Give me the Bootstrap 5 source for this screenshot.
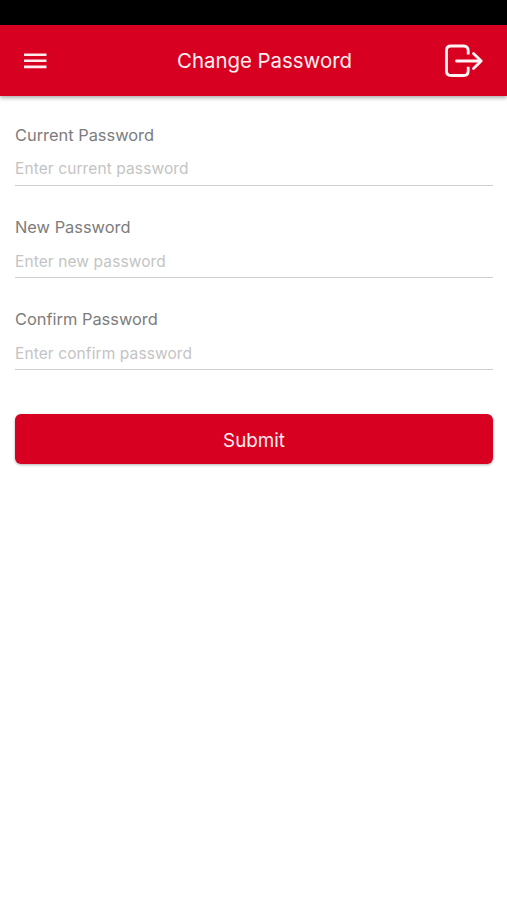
<!DOCTYPE html>
<html lang="en">
<head>
<meta charset="utf-8">
<meta name="viewport" content="width=device-width, initial-scale=1">
<title>Change Password</title>
<link href="https://cdn.jsdelivr.net/npm/bootstrap@5.3.0/dist/css/bootstrap.min.css" rel="stylesheet">
<style>
body { font-family: Inter, "Liberation Sans", sans-serif; min-height: 100vh; }
.status-strip { height: 25px; background: #000; }
.app-header { height: 71px; padding: 0 22px 0 23px; background: #d80020; box-shadow: 0 2px 4px rgba(0,0,0,.32); }
.app-title { font-size: 20.4px; line-height: 24px; color: #ffeef0; }
.header-side { width: 42px; }
.header-menu { width: 63px; }
.form-area { padding: 27px 14px 0 15px; }
.field { height: 92.2px; }
.field label { display: block; font-size: 16.4px; line-height: 24px; color: #7c7c7c; }
.field .form-control { height: 39px; padding: 10px 0 6px; border: 0; border-bottom: 1px solid #cfcfcf; border-radius: 0; font-size: 15.5px; line-height: 22px; letter-spacing: .1px; box-shadow: none; }
.field + .field label { padding-top: 1px; line-height: 23px; }
.field + .field .form-control { padding: 11px 0 5px; }
.field .form-control::placeholder { color: #c4c4c4; opacity: 1; }
.btn-submit, .btn-submit:hover { height: 50px; margin-top: 14.6px; padding: 8px 0 5px; border: 0; border-radius: 6px; background: #d80020; color: #ffeef0; font-size: 18.8px; box-shadow: 0 1px 3px rgba(0,0,0,.3); }
</style>
</head>
<body class="bg-white">
<div class="status-strip"></div>
<header class="app-header d-flex align-items-center justify-content-between">
  <button class="header-menu btn p-0 border-0 d-flex" type="button" aria-label="Menu">
    <svg width="24" height="18" viewBox="0 0 24 18" fill="#ffe9ec"><path d="M1 1.4h22.5v2.6H1zM1 7.5h22.5v2.6H1zM1 13.6h22.5v2.6H1z"/></svg>
  </button>
  <h1 class="app-title fw-normal m-0">Change Password</h1>
  <button class="header-side btn p-0 border-0 d-flex" type="button" aria-label="Log out">
    <svg width="42" height="36" viewBox="0 0 42 36" fill="none" stroke="#fff4f5" stroke-width="2.8" stroke-linecap="round" stroke-linejoin="round"><path stroke-linecap="butt" d="M25.200 11.500V7.500Q25.200 3 20.700 3H8Q3.500 3 3.500 7.500V28Q3.500 32.500 8 32.500H20.700Q25.200 32.500 25.200 28V23.700"/><path d="M13.500 18H38.200M30.500 10.500 38.200 18 30.500 25.500"/></svg>
  </button>
</header>
<main class="form-area">
  <form>
    <div class="field">
      <label for="current">Current Password</label>
      <input class="form-control" id="current" type="password" placeholder="Enter current password">
    </div>
    <div class="field">
      <label for="new">New Password</label>
      <input class="form-control" id="new" type="password" placeholder="Enter new password">
    </div>
    <div class="field">
      <label for="confirm">Confirm Password</label>
      <input class="form-control" id="confirm" type="password" placeholder="Enter confirm password">
    </div>
    <button class="btn btn-submit w-100" type="button">Submit</button>
  </form>
</main>
<script src="https://cdn.jsdelivr.net/npm/bootstrap@5.3.0/dist/js/bootstrap.bundle.min.js"></script>
</body>
</html>
